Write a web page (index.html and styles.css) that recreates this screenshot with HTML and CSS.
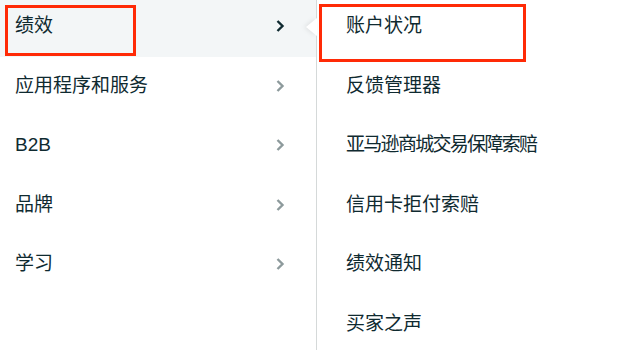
FILE: index.html
```html
<!DOCTYPE html>
<html lang="zh-CN">
<head>
    <meta charset="UTF-8">
    <title>菜单</title>
    <link rel="stylesheet" href="styles.css">
</head>
<body>

    <!-- 二级菜单 -->
    <div class="menu">
        <!-- 左侧分类 -->
        <ul class="menu-left">
            <li class="menu-item active">
                <span>绩效</span>
                <svg class="chevron" width="10" height="14" viewBox="0 0 10 14"><polyline points="2.5,2 7.5,7 2.5,12" /></svg>
                <i class="notch"></i>
            </li>
            <li class="menu-item">
                <span>应用程序和服务</span>
                <svg class="chevron" width="10" height="14" viewBox="0 0 10 14"><polyline points="2.5,2 7.5,7 2.5,12" /></svg>
            </li>
            <li class="menu-item">
                <span>B2B</span>
                <svg class="chevron" width="10" height="14" viewBox="0 0 10 14"><polyline points="2.5,2 7.5,7 2.5,12" /></svg>
            </li>
            <li class="menu-item">
                <span>品牌</span>
                <svg class="chevron" width="10" height="14" viewBox="0 0 10 14"><polyline points="2.5,2 7.5,7 2.5,12" /></svg>
            </li>
            <li class="menu-item">
                <span>学习</span>
                <svg class="chevron" width="10" height="14" viewBox="0 0 10 14"><polyline points="2.5,2 7.5,7 2.5,12" /></svg>
            </li>
        </ul>

        <!-- 右侧子菜单 -->
        <ul class="menu-right">
            <li class="sub-item">账户状况</li>
            <li class="sub-item">反馈管理器</li>
            <li class="sub-item narrow">亚马逊商城交易保障索赔</li>
            <li class="sub-item">信用卡拒付索赔</li>
            <li class="sub-item">绩效通知</li>
            <li class="sub-item">买家之声</li>
        </ul>
    </div>

    <!-- 标注框 -->
    <div class="mark mark-left"></div>
    <div class="mark mark-right"></div>

</body>
</html>
```

FILE: styles.css
```css
/* 通用样式 */
body {
    margin: 0;
    padding: 0;
    background: #fff;
    font-family: "Liberation Sans", "Noto Sans CJK SC", sans-serif;
    font-size: 19px;
    color: #0f2a30;
}

ul {
    list-style: none;
    margin: 0;
    padding: 0;
}

.menu {
    display: flex;
    height: 350px;
    overflow: hidden;
}

/* 左侧分类 */
.menu-left {
    width: 316px;
    flex-shrink: 0;
    border-right: 1px solid #d5d9d9;
}

.menu-item {
    position: relative;
    height: 57px;
    margin-bottom: 2.5px;
    display: flex;
    justify-content: space-between;
    align-items: flex-start;
    padding: 14px 31px 0 15px;
    box-sizing: border-box;
    line-height: 24px;
}

.menu-item.active {
    background-color: #f3f6f7;
}

.chevron {
    margin-top: 5px;
    fill: none;
    stroke: #8d9a9c;
    stroke-width: 2.4;
}

.active .chevron {
    stroke: #0f2a30;
}

/* 指向子菜单的小三角 */
.notch {
    position: absolute;
    right: -1px;
    top: 18px;
    width: 0;
    height: 0;
    border-top: 9.5px solid transparent;
    border-bottom: 9.5px solid transparent;
    border-right: 11px solid #fff;
    filter: drop-shadow(-2px 0 2px rgba(0, 0, 0, 0.08));
}

/* 右侧子菜单 */
.menu-right {
    flex: 1;
    padding-left: 29px;
}

.sub-item {
    height: 57px;
    margin-bottom: 2.5px;
    padding-top: 14px;
    box-sizing: border-box;
    line-height: 24px;
}

.sub-item.narrow {
    letter-spacing: -1.7px;
}

/* 红色标注框 */
.mark {
    position: absolute;
    border: 3px solid #ff2a06;
    box-sizing: border-box;
}

.mark-left {
    left: 5px;
    top: 5px;
    width: 131px;
    height: 51px;
}

.mark-right {
    left: 319px;
    top: 4px;
    width: 207px;
    height: 58px;
}
```
